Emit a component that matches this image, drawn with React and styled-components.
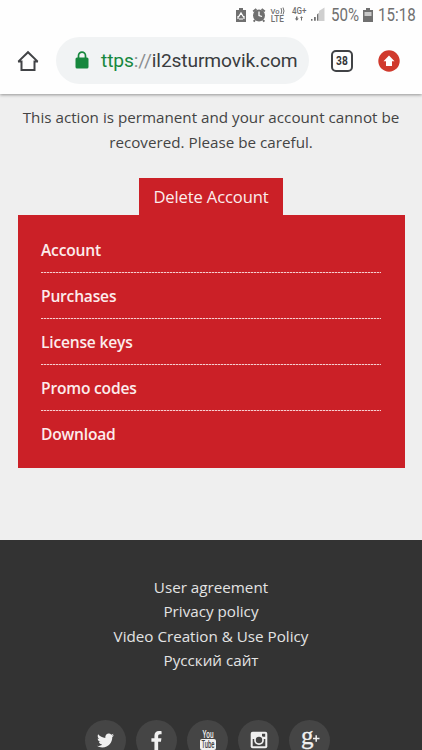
import React from "react";
import styled, { createGlobalStyle } from "styled-components";
import { FaTwitter, FaFacebookF } from "react-icons/fa";

const GlobalStyle = createGlobalStyle`
  html, body { margin: 0; background: #efefef; }
  * { box-sizing: border-box; }
`;

const Screen = styled.div`
  width: 422px;
  height: 750px;
  overflow: hidden;
  display: flex;
  flex-direction: column;
  background: #efefef;
  font-family: "Open Sans", sans-serif;
  color: #444;
`;

const BrowserHeader = styled.header`
  flex: none;
  height: 94px;
  background: #fefefe;
  box-shadow: 0 1px 3px rgba(0, 0, 0, 0.38);
`;

const StatusBar = styled.div`
  height: 32px;
  padding: 0 5px 2px 0;
  display: flex;
  align-items: center;
  justify-content: flex-end;
  font-family: Roboto, sans-serif;
  color: #707070;
`;

const StatusIcons = styled.svg`
  display: block;
  width: 96px;
  height: 30px;
`;

const StatusValue = styled.span`
  flex: none;
  width: ${(p) => p.$width}px;
  font-size: 18px;
  line-height: 30px;
  white-space: nowrap;
`;

const Squeezed = styled.span`
  display: inline-block;
  transform: scaleX(${(p) => p.$scale});
  transform-origin: ${(p) => p.$origin || "left"} center;
`;

const BatteryIcon = styled.svg`
  flex: none;
  width: 10px;
  height: 16px;
  margin-right: 5px;
`;

const Toolbar = styled.div`
  height: 62px;
  display: flex;
  align-items: flex-start;
  padding-left: 16px;
`;

const HomeIcon = styled.svg`
  width: 24px;
  height: 24px;
  margin: 17px 16px 0 0;
`;

const AddressBar = styled.div`
  width: 253px;
  height: 47px;
  margin-top: 5px;
  border-radius: 24px;
  background: #f1f3f4;
  display: flex;
  align-items: center;
  padding-left: 19px;
`;

const LockIcon = styled.svg`
  width: 14px;
  height: 18px;
  margin: 0 12px 2px 0;
`;

const Url = styled.span`
  font-family: Roboto, sans-serif;
  font-size: 19.2px;
  line-height: 24px;
  letter-spacing: -0.12px;
  padding-top: 1px;
  white-space: nowrap;
  color: #3a3c3f;
`;

const Scheme = styled.span`
  color: #16873d;
`;

const Slashes = styled.span`
  color: #8b8e91;
`;

const TabCount = styled.div`
  width: 22px;
  height: 22px;
  margin: 18px 0 0 22px;
  border: 2px solid #414346;
  border-radius: 5px;
  display: grid;
  place-items: center;
  font: 700 12px/18px Roboto, sans-serif;
  color: #333538;
`;

const UpdateIcon = styled.svg`
  width: 22px;
  height: 22px;
  margin: 18px 0 0 25px;
`;

const Content = styled.main`
  flex: none;
  height: 445.5px;
  padding: 11px 17px 0;
  display: flex;
  flex-direction: column;
  align-items: center;
`;

const Warning = styled.p`
  margin: 0;
  width: 390px;
  font-size: 15.2px;
  line-height: 24.7px;
  letter-spacing: 0.01px;
  text-align: center;
  white-space: nowrap;
`;

const DeleteButton = styled.button`
  width: 144px;
  height: 37px;
  margin: 23.6px 0 0;
  padding: 0;
  border: 0;
  background: #cb2027;
  color: #fbecec;
  font: 400 16.6px/37px "Open Sans", sans-serif;
  letter-spacing: -0.13px;
`;

const Panel = styled.nav`
  width: 387px;
  height: 253px;
  padding: 12px 23.5px 0;
  background: #cb2027;
`;

const PanelLink = styled.a`
  display: block;
  width: 340px;
  height: 46px;
  font-size: 15.6px;
  font-weight: 600;
  line-height: 46px;
  letter-spacing: -0.2px;
  color: #fcecec;
  background: repeating-linear-gradient(90deg, #f6cfd0 0 2px, #d9595e 2px 3px) 0 45px / 100% 1px no-repeat;
  &:last-child { background: none; }
`;

const Footer = styled.footer`
  flex: none;
  height: 210.5px;
  padding-top: 35.2px;
  background: #333;
  display: flex;
  flex-direction: column;
  align-items: center;
`;

const FooterLink = styled.a`
  font-size: 15.2px;
  line-height: 24.6px;
  color: #e3e3e3;
  white-space: nowrap;
`;

const SocialRow = styled.div`
  margin-top: 46.5px;
  padding-right: 7px;
  display: flex;
  gap: 10px;
`;

const SocialButton = styled.a`
  width: 41px;
  height: 41px;
  border-radius: 50%;
  background: #454545;
  color: #f0f0f0;
  display: grid;
  place-items: center;
  font-size: ${(p) => p.$size || 18}px;
`;

const Glyph = styled.svg`
  width: 22px;
  height: 22px;
  display: block;
`;

const menu = ["Account", "Purchases", "License keys", "Promo codes", "Download"];
const links = ["User agreement", "Privacy policy", "Video Creation & Use Policy", "Русский сайт"];

function StatusGlyphs() {
  return (
    <StatusIcons viewBox="236 0 96 30" fill="#707070" fontFamily="Roboto, sans-serif">
      <path d="M240 8h4v2h3v12h-10V10h3z" />
      <path d="M239.5 17l2.5-4 2.5 4M240 19h4M239 16v3M245 16v3" fill="none" stroke="#fff" strokeWidth="1.2" />
      <circle cx="260" cy="15.500" r="6" />
      <path d="M254.200 11.600l3.200-2.700M262.600 8.900l3.200 2.700M256 20l-1.300 1.700M264 20l1.300 1.700" stroke="#707070" strokeWidth="2" />
      <path d="M260 11.500v4l3 1" fill="none" stroke="#fff" strokeWidth="1.300" />
      <text x="271.500" y="13.800" fontSize="8" fontWeight="500" textLength="9" lengthAdjust="spacingAndGlyphs">Vo</text>
      <path d="M282 8q1.500 3 0 6M284 7.500q2 3.500 0 7" fill="none" stroke="#707070" />
      <text x="271.800" y="21.700" fontSize="9" fontWeight="500" textLength="13" lengthAdjust="spacingAndGlyphs">LTE</text>
      <text x="293" y="13.600" fontSize="8.500" fontWeight="500" textLength="14.500" lengthAdjust="spacingAndGlyphs">4G+</text>
      <path d="M297 16.500h1.500v2h1.300l-2 2.300-2-2.300h1.200zM302 20.500v-2.500h-1l1.500-1.800 1.500 1.800h-1v2.500z" />
      <path d="M312 19h1.500v1.800h-1.500zM315 17h1.800v3.800h-1.800zM318 14.500l1.500-1.500v7.800h-1.500z" />
      <path d="M320 11l5.500-3.500v13.500h-5.500z" fill="#cfcfcf" />
    </StatusIcons>
  );
}

export default function App() {
  return (
    <>
      <GlobalStyle />
      <Screen>
        <BrowserHeader>
          <StatusBar>
            <StatusGlyphs />
            <StatusValue $width={32}><Squeezed $scale={0.84}>50%</Squeezed></StatusValue>
            <BatteryIcon viewBox="0 0 10 16" fill="#707070">
              <path d="M3 1h4v2h3v12H0V3h3z" />
              <path d="M1.500 5h7v4h-7z" fill="#c9c9c9" />
            </BatteryIcon>
            <StatusValue $width={39}><Squeezed $scale={0.84}>15:18</Squeezed></StatusValue>
          </StatusBar>
          <Toolbar>
            <HomeIcon viewBox="0 0 24 24" fill="none" stroke="#414346" strokeWidth="2">
              <path d="M2.300 12.600L12 3.200l9.700 9.400M2 12.500h3.500V21h13v-8.500H22" />
            </HomeIcon>
            <AddressBar>
              <LockIcon viewBox="0 0 14 18">
                <rect x="0.500" y="6.500" width="13" height="11" rx="1.500" fill="#16873d" />
                <path d="M3.500 7V4.700a3.500 3.500 0 0 1 7 0V7" fill="none" stroke="#16873d" strokeWidth="1.700" />
              </LockIcon>
              <Url><Scheme>ttps</Scheme><Slashes>://</Slashes>il2sturmovik.com</Url>
            </AddressBar>
            <TabCount><Squeezed $scale={0.85} $origin="center">38</Squeezed></TabCount>
            <UpdateIcon viewBox="0 0 22 22">
              <circle cx="11" cy="11" r="10.700" fill="#d03a2d" />
              <path d="M11 5.500l5.500 5.700h-2.500v4.800h-6v-4.800h-2.500z" fill="#fff" />
            </UpdateIcon>
          </Toolbar>
        </BrowserHeader>
        <Content>
          <Warning>
            This action is permanent and your account cannot be<br />
            recovered. Please be careful.
          </Warning>
          <DeleteButton>Delete Account</DeleteButton>
          <Panel>
            {menu.map((item) => <PanelLink key={item}>{item}</PanelLink>)}
          </Panel>
        </Content>
        <Footer>
          {links.map((item) => <FooterLink key={item}>{item}</FooterLink>)}
          <SocialRow>
            <SocialButton $size={17}><FaTwitter /></SocialButton>
            <SocialButton $size={19}><FaFacebookF /></SocialButton>
            <SocialButton>
              <Glyph viewBox="0 0 22 22" fill="#f0f0f0" fontFamily="Roboto, sans-serif" fontWeight="500">
                <text x="5.500" y="9" fontSize="10" textLength="11" lengthAdjust="spacingAndGlyphs">You</text>
                <rect x="3" y="10" width="16" height="11" rx="2" />
                <text x="4.500" y="19" fontSize="10" fill="#454545" textLength="13" lengthAdjust="spacingAndGlyphs">Tube</text>
              </Glyph>
            </SocialButton>
            <SocialButton>
              <Glyph viewBox="0 0 22 22">
                <rect x="2.700" y="2.700" width="16.600" height="16.600" rx="2" fill="#f0f0f0" />
                <path d="M4.700 10h2.300a4 4 0 1 0 8 0h2.300v7.300H4.700zM14 4.700h3.200v3h-3.200z" fill="#454545" />
                <circle cx="11" cy="11" r="4.900" fill="#f0f0f0" />
                <circle cx="11" cy="11" r="3.200" fill="#454545" />
              </Glyph>
            </SocialButton>
            <SocialButton>
              <Glyph viewBox="0 0 22 22" fill="#f0f0f0" stroke="#f0f0f0">
                <text x="2" y="14.500" fontFamily="Liberation Serif, serif" fontSize="25" strokeWidth="0.300">g</text>
                <path d="M14 9.500h6.500M17.200 6.200v6.500" fill="none" strokeWidth="1.500" />
              </Glyph>
            </SocialButton>
          </SocialRow>
        </Footer>
      </Screen>
    </>
  );
}
